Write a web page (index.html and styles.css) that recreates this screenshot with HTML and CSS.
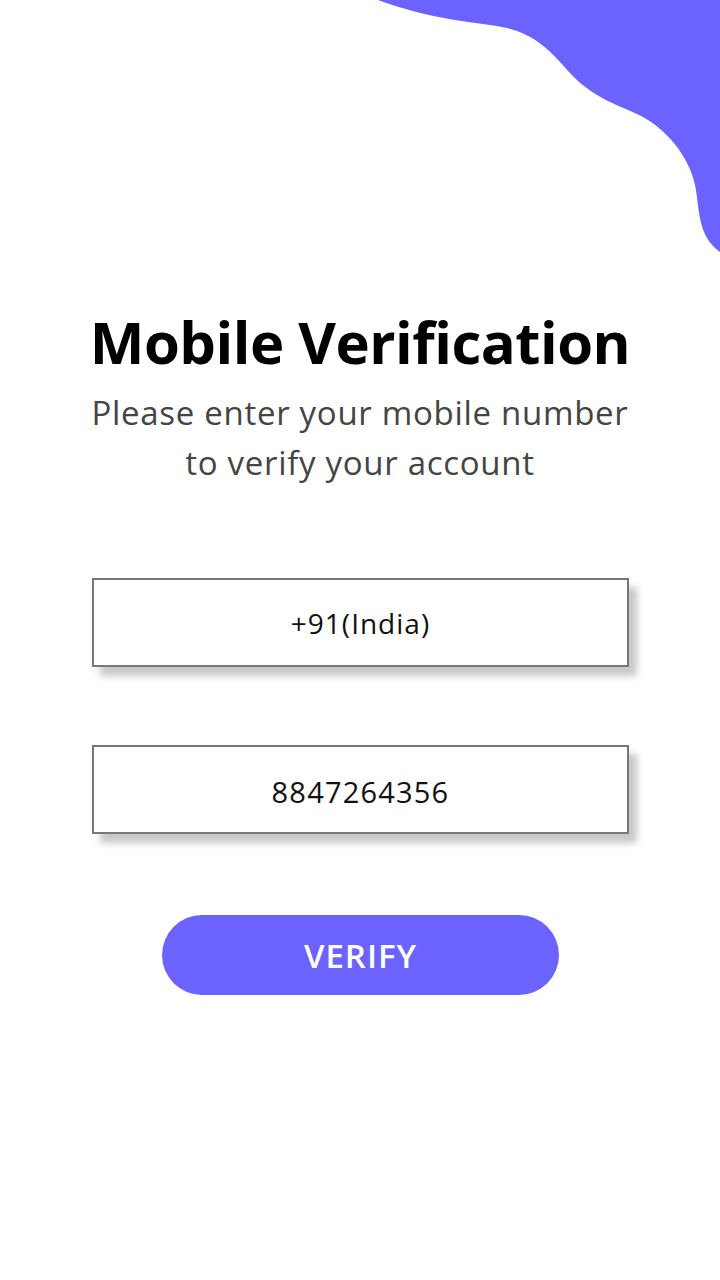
FILE: index.html
```html
<!DOCTYPE html>
<html>
<head>
<meta charset="utf-8">
<link rel="stylesheet" href="styles.css">
</head>
<body>
<div class="screen">
  <svg class="blob" width="720" height="260" viewBox="0 0 720 260" xmlns="http://www.w3.org/2000/svg">
    <path d="M378 0 C420 15 450 20 490 25 C530 30 545 45 570 73 C595 100 620 105 643 117 C670 132 690 160 695 185 C700 210 697 235 720 252 L720 0 Z" fill="#6c63ff"/>
  </svg>
  <main class="content">
    <h1 class="title">Mobile Verification</h1>
    <p class="subtitle">Please enter your mobile number<br>to verify your account</p>
    <div class="field field-first">+91(India)</div>
    <div class="field field-second">8847264356</div>
    <button class="verify">VERIFY</button>
  </main>
</div>
</body>
</html>
```
FILE: styles.css
```css
* { box-sizing: border-box; }
html, body { margin: 0; padding: 0; background: #fff; }
body { font-family: "Open Sans", "Noto Sans", sans-serif; }
.screen { position: relative; width: 720px; height: 1280px; overflow: hidden; background: #fff; }
.blob { position: absolute; top: 0; left: 0; }
.content {
  display: flex; flex-direction: column; align-items: center;
  padding-top: 302px;
}
.title {
  margin: 0; font-size: 58px; font-weight: 700; color: #000;
  line-height: 80px; letter-spacing: -0.5px;
}
.subtitle {
  margin: 0; text-align: center; font-size: 33px; color: #444;
  line-height: 50px; font-weight: 500; margin-top: 6px; letter-spacing: 0.7px;
}
.field {
  width: 537px; height: 89px; border: 2px solid #777;
  display: flex; align-items: center; justify-content: center;
  font-size: 28px; color: #111; background: #fff;
  box-shadow: 8px 9px 7px rgba(0,0,0,0.22);
  margin-left: 1px; letter-spacing: 1px;
}
.field-second { font-size: 29px; letter-spacing: 1.2px; padding-top: 3px; }
.field-first { margin-top: 90px; }
.field-second { margin-top: 78px; }
.verify {
  margin-top: 81px; width: 397px; height: 80px; border: none; border-radius: 40px;
  background: #6c63ff; color: #fff; font-family: inherit; font-size: 33px; font-weight: 600;
  margin-left: 1px; letter-spacing: 1px;
}
```
